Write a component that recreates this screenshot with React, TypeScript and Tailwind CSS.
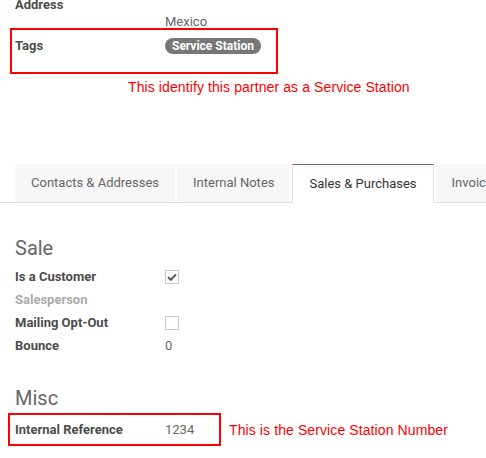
import React from "react";

const labelCls = "w-[150px] shrink-0 font-bold text-[#4c4c4c]";

const Checkbox = ({ checked }: { checked?: boolean }) => (
  <div className="w-[14px] h-[14px] border border-[#c8c8c8] bg-white flex items-center justify-center">
    {checked && (
      <svg width="10" height="8" viewBox="0 0 10 8">
        <path d="M1 4.2 L3.8 6.8 L9 1.4" stroke="#555" strokeWidth="2" fill="none" />
      </svg>
    )}
  </div>
);

const tabs = [
  { name: "Contacts & Addresses" },
  { name: "Internal Notes" },
  { name: "Sales & Purchases", active: true },
  { name: "Invoicing" },
];

export default function App() {
  return (
    <div className="w-[486px] h-[458px] overflow-hidden bg-white text-[13px] font-['Roboto',sans-serif]">
      {/* address block */}
      <div className="mt-[-4px] h-[17px] pl-[15px] flex leading-[17px]">
        <span className={labelCls}>Address</span>
      </div>
      <div className="h-[15px] pl-[15px] flex leading-[18px]">
        <span className="w-[150px] shrink-0" />
        <span className="text-[#666]">Mexico</span>
      </div>

      {/* tags, boxed */}
      <div className="ml-[10px] w-[268px] h-[46px] border-2 border-[#ff0000] pl-[3px] pt-[8px]">
        <div className="flex items-center leading-[16px]">
          <span className={labelCls}>Tags</span>
          <span className="h-[16px] px-[7px] rounded-full bg-[#777] text-white font-bold text-[12px] leading-[16px]">
            Service Station
          </span>
        </div>
      </div>
      <div className="mt-[5px] ml-[128px] text-[14px] tracking-[0.1px] leading-[16px] text-[#ff0000] font-['Liberation_Sans',Arial,sans-serif]">
        This identify this partner as a Service Station
      </div>

      {/* tabs */}
      <div className="mt-[69px] h-[39px] pl-[15px] flex items-start gap-[2px] border-b border-[#ddd]">
        {tabs.map((t) =>
          t.active ? (
            <div
              key={t.name}
              className="h-[39px] px-[16px] flex items-center bg-white border-x border-[#ddd] border-t border-t-[#875a7b] text-[#333] whitespace-nowrap"
            >
              {t.name}
            </div>
          ) : (
            <div
              key={t.name}
              className="h-[38px] px-[16px] flex items-center bg-[#f7f7f7] text-[#666] whitespace-nowrap"
            >
              {t.name}
            </div>
          )
        )}
      </div>

      {/* Sale */}
      <div className="mt-[33px] pl-[15px] text-[20px] leading-[24px] text-[#666]">Sale</div>
      <div className="mt-[5px] pl-[15px]">
        <div className="h-[23px] flex items-center">
          <span className={labelCls}>Is a Customer</span>
          <Checkbox checked />
        </div>
        <div className="h-[23px] flex items-center">
          <span className="w-[150px] shrink-0 font-bold text-[#aaa]">Salesperson</span>
        </div>
        <div className="h-[23px] flex items-center">
          <span className={labelCls}>Mailing Opt-Out</span>
          <Checkbox />
        </div>
        <div className="h-[23px] flex items-center">
          <span className={labelCls}>Bounce</span>
          <span className="text-[#666]">0</span>
        </div>
      </div>

      {/* Misc */}
      <div className="mt-[29px] pl-[15px] text-[20px] leading-[24px] text-[#666]">Misc</div>
      <div className="mt-[3px] flex items-center">
        <div className="ml-[8px] w-[213px] h-[33px] border-2 border-[#ff0000] pl-[5px] flex items-center">
          <span className={labelCls}>Internal Reference</span>
          <span className="text-[#666]">1234</span>
        </div>
        <span className="ml-[8px] text-[14px] tracking-[0.1px] leading-[16px] text-[#ff0000] font-['Liberation_Sans',Arial,sans-serif]">
          This is the Service Station Number
        </span>
      </div>
    </div>
  );
}
